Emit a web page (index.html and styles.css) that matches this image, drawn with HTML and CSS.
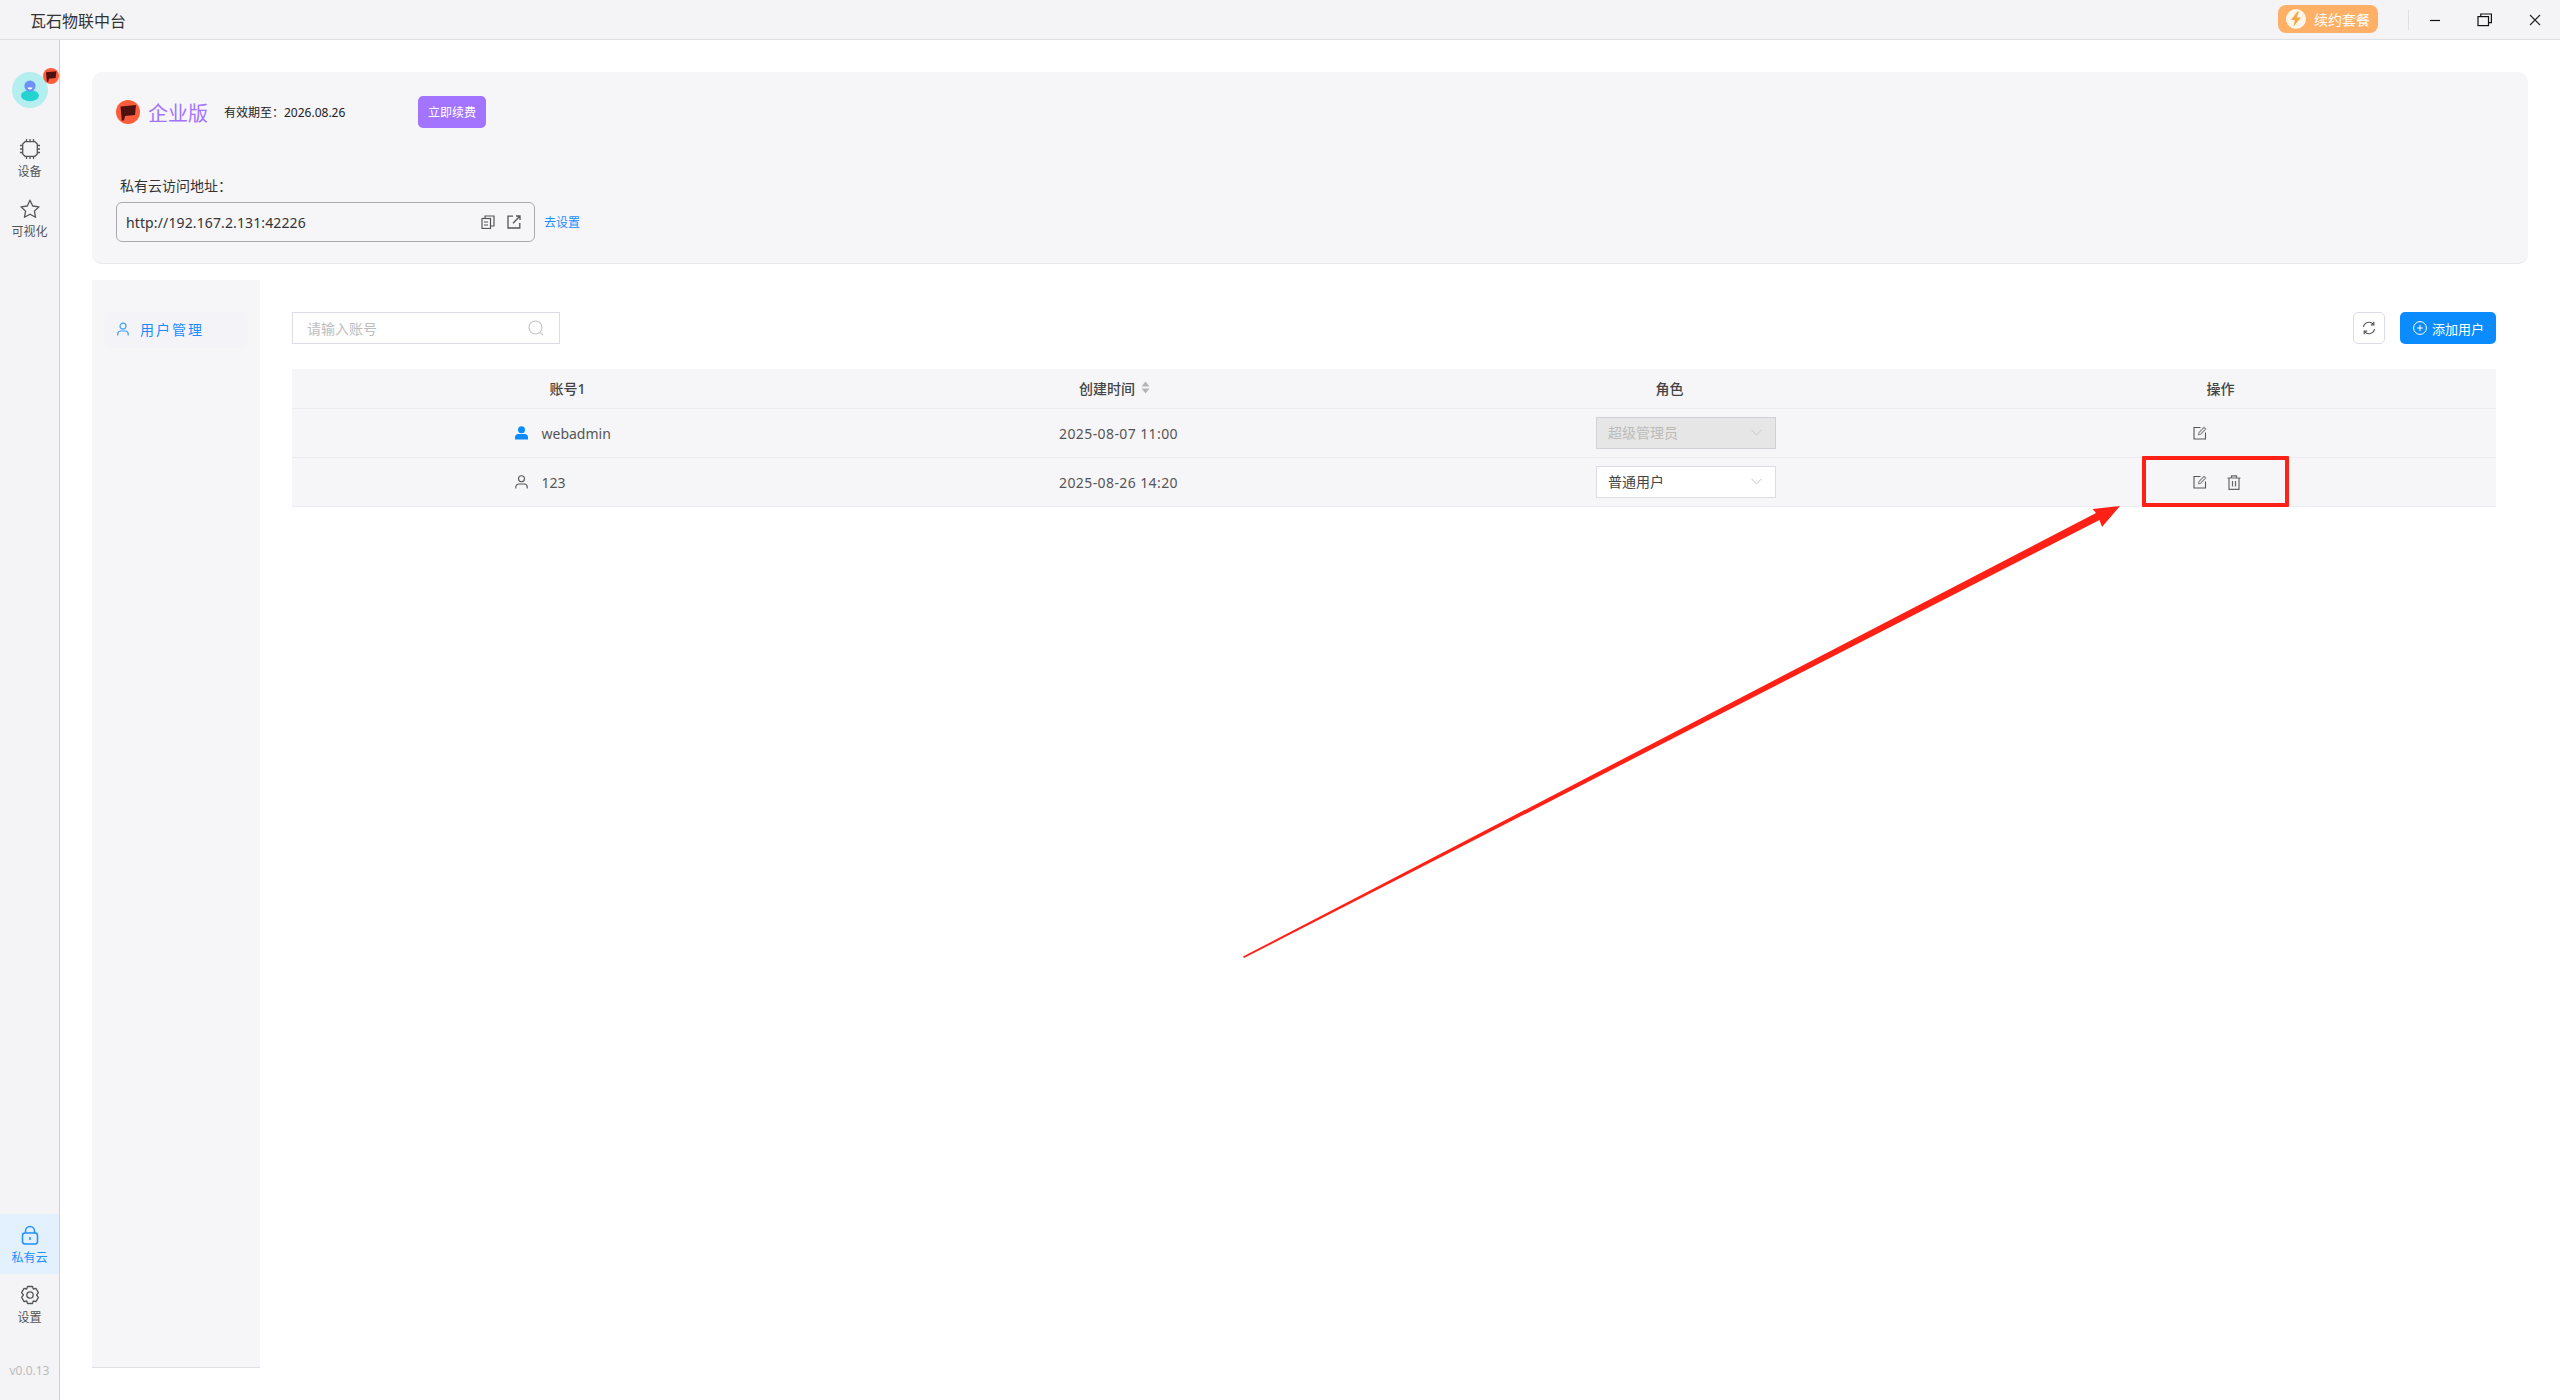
FILE: index.html
```html
<!DOCTYPE html>
<html>
<head>
    <title>瓦石物联中台</title>
    <link rel="stylesheet" href="styles.css">
</head>
<body>
    <div class="titlebar">
        <div class="app-name">瓦石物联中台</div>
        <div class="renew-pill">
            <span class="bolt">
                <svg width="14" height="16" viewBox="0 0 14 16"><path d="M8.5 0.5 2 9h4l-1.5 6.5L12 6.5H7.6L10 0.5z" fill="#f5a640"/></svg>
            </span>
            <span>续约套餐</span>
        </div>
        <div class="title-sep"></div>
        <div class="win-btn">
            <svg width="12" height="12" viewBox="0 0 12 12"><path d="M1 6.5h10" stroke="#111" stroke-width="1.2"/></svg>
        </div>
        <div class="win-btn">
            <svg width="16" height="14" viewBox="0 0 16 14" fill="none" stroke="#111" stroke-width="1.2"><rect x="1" y="3.6" width="10.5" height="9"/><path d="M3.8 3.6V1h10.6v8.6h-2.9"/></svg>
        </div>
        <div class="win-btn">
            <svg width="12" height="12" viewBox="0 0 12 12"><path d="M1 1l10 10M11 1 1 11" stroke="#222" stroke-width="1.1"/></svg>
        </div>
    </div>

    <div class="layout">
        <div class="sidebar">
            <div class="avatar">
                <svg width="36" height="36" viewBox="0 0 36 36">
                    <circle cx="18" cy="18" r="18" fill="#b5eeee"/>
                    <ellipse cx="18" cy="23.6" rx="9" ry="5.6" fill="#22d3d0"/>
                    <circle cx="18" cy="14" r="5.6" fill="#6d92f5"/>
                    <path d="M15.6 15.6h4.8a2.4 2 0 0 1-4.8 0z" fill="#fff"/>
                </svg>
                <svg class="avatar-badge" width="16" height="16" viewBox="0 0 24 24">
                    <circle cx="12" cy="12" r="12" fill="#ff5c3c"/>
                    <path d="M4.5 6.5 20 5l-1 10-10 1-1 4.5H5.8z" fill="#4d1210"/>
                </svg>
            </div>
            <div class="nav-item">
                <svg width="20" height="20" viewBox="0 0 20 20" fill="none" stroke="#555" stroke-width="1.3"><path d="M5 2.700h10l2.300 2.300v10L15 17.300H5L2.700 15V5z"/><path d="M6.500 0v2.700M10 0v2.700M13.500 0v2.700M6.500 17.300V20M10 17.300V20M13.500 17.300V20M0 6.500h2.700M0 10h2.700M0 13.500h2.700M17.300 6.500H20M17.300 10H20M17.300 13.500H20"/></svg>
                <span>设备</span>
            </div>
            <div class="nav-item">
                <svg width="20" height="20" viewBox="0 0 20 20" fill="none" stroke="#555" stroke-width="1.3" stroke-linejoin="round"><path d="M10 1.200l2.700 5.800 6.300.8-4.600 4.300 1.200 6.200L10 15.200l-5.600 3.100 1.200-6.200L1 7.800l6.300-.8z"/></svg>
                <span>可视化</span>
            </div>
            <div class="sidebar-fill"></div>
            <div class="nav-item active">
                <svg width="20" height="20" viewBox="0 0 20 20" fill="none" stroke="#1e90ff" stroke-width="1.5"><rect x="2.500" y="8" width="15" height="11" rx="2.500"/><path d="M5.500 8V6a4.500 4.500 0 0 1 9 0v2"/><path d="M10 12v3"/></svg>
                <span>私有云</span>
            </div>
            <div class="nav-item">
                <svg width="20" height="20" viewBox="0 0 20 20" fill="none" stroke="#555" stroke-width="1.3" stroke-linejoin="round"><path d="M7.500 1.500h5l.8 2.500 2.600-.6 2.500 4.300-1.800 2.300 1.800 2.300-2.500 4.300-2.600-.6-.8 2.500h-5l-.8-2.500-2.600.6-2.500-4.300L3.400 10 1.600 7.700l2.500-4.300 2.600.6z"/><circle cx="10" cy="10" r="3.200"/></svg>
                <span>设置</span>
            </div>
            <div class="version">v0.0.13</div>
        </div>

        <div class="main">
            <div class="plan-card">
                <div class="plan-row">
                    <svg width="24" height="24" viewBox="0 0 24 24">
                        <circle cx="12" cy="12" r="12" fill="#ff5c3c"/>
                        <path d="M4.500 6.500 20 5l-1 10-10 1-1 4.500H5.800z" fill="#4d1210"/>
                    </svg>
                    <span class="plan-name">企业版</span>
                    <span class="plan-date">有效期至：2026.08.26</span>
                    <button class="renew-btn">立即续费</button>
                </div>
                <div class="addr-label">私有云访问地址：</div>
                <div class="addr-row">
                    <div class="addr-box">
                        <span class="addr-text">http://192.167.2.131:42226</span>
                        <svg width="14" height="14" viewBox="0 0 14 14" fill="none" stroke="#555" stroke-width="1.200"><rect x="1" y="3.500" width="8.500" height="10"/><path d="M4 3.500V1h9v10h-3.500M3 7h4M3 10h4"/></svg>
                        <svg width="14" height="14" viewBox="0 0 14 14" fill="none" stroke="#555" stroke-width="1.300"><path d="M6 1.200H1v11.800h11.800V8"/><path d="M6 8.200 13 1M9 1h4v4"/></svg>
                    </div>
                    <a class="addr-link">去设置</a>
                </div>
            </div>

            <div class="lower">
                <div class="side-panel">
                    <div class="panel-item">
                        <svg width="14" height="14" viewBox="0 0 14 14" fill="none" stroke="#3aa0ff" stroke-width="1.200"><circle cx="7" cy="4.200" r="3"/><path d="M1.800 13.500v-1.500a3 3 0 0 1 3-3h4.400a3 3 0 0 1 3 3v1.500"/></svg>
                        <span>用户管理</span>
                    </div>
                </div>
                <div class="content">
                    <div class="toolbar">
                        <div class="search-box">
                            <input class="search-input" type="text" placeholder="请输入账号">
                            <svg width="16" height="16" viewBox="0 0 16 16" fill="none" stroke="#c4c4c4" stroke-width="1.100"><circle cx="7.500" cy="7.500" r="6.500"/><path d="M12.300 12.300l2.700 2.700"/></svg>
                        </div>
                        <div class="toolbar-fill"></div>
                        <button class="refresh-btn">
                            <svg width="14" height="14" viewBox="0 0 14 14" fill="none" stroke="#555" stroke-width="1.200"><path d="M1.500 6A5.600 5.600 0 0 1 11.400 3.400M12.500 8A5.600 5.600 0 0 1 2.600 10.600"/><path d="M11.800 0.800v3h-3M2.200 13.200v-3h3"/></svg>
                        </button>
                        <button class="add-btn">
                            <svg width="14" height="14" viewBox="0 0 14 14" fill="none" stroke="#fff" stroke-width="1"><circle cx="7" cy="7" r="6.400"/><path d="M7 4v6M4 7h6"/></svg>
                            <span>添加用户</span>
                        </button>
                    </div>

                    <table class="user-table">
                        <thead>
                            <tr>
                                <th>账号1</th>
                                <th class="sort-head">创建时间<svg class="sort-icon" width="9" height="13" viewBox="0 0 9 13" fill="#b5b5b5"><path d="M4.500 0.500 8.500 5.500H0.500zM4.500 12.500 0.500 7.500H8.500z"/></svg></th>
                                <th>角色</th>
                                <th>操作</th>
                            </tr>
                        </thead>
                        <tbody>
                            <tr>
                                <td>
                                    <div class="account">
                                        <svg width="13" height="14" viewBox="0 0 13 14" fill="#0a8cff"><circle cx="6.500" cy="3.800" r="3.500"/><path d="M0 13.500v-2a3.500 3.500 0 0 1 3.500-3.500h6a3.500 3.500 0 0 1 3.500 3.500v2z"/></svg>
                                        <span>webadmin</span>
                                    </div>
                                </td>
                                <td class="date-cell">2025-08-07 11:00</td>
                                <td>
                                    <div class="role-select disabled">
                                        <span>超级管理员</span>
                                        <svg width="11" height="7" viewBox="0 0 11 7" fill="none" stroke="#c8c8c8"><path d="M0.500 0.800 5.500 6l5-5.200"/></svg>
                                    </div>
                                </td>
                                <td>
                                    <div class="actions">
                                        <svg width="14" height="14" viewBox="0 0 14 14" fill="none" stroke="#555" stroke-width="1.100"><path d="M7.500 1.500H1v11.500h11.500V6.500"/><path d="M5.500 8.800l.5-2.300L11 1.300l1.700 1.700-5 5.200z" stroke="#888"/></svg>
                                    </div>
                                </td>
                            </tr>
                            <tr>
                                <td>
                                    <div class="account">
                                        <svg width="13" height="14" viewBox="0 0 13 14" fill="none" stroke="#555" stroke-width="1.100"><circle cx="6.500" cy="3.800" r="3"/><path d="M0.800 13.500v-1.500a3 3 0 0 1 3-3h5.400a3 3 0 0 1 3 3v1.500"/></svg>
                                        <span>123</span>
                                    </div>
                                </td>
                                <td class="date-cell">2025-08-26 14:20</td>
                                <td>
                                    <div class="role-select">
                                        <span>普通用户</span>
                                        <svg width="11" height="7" viewBox="0 0 11 7" fill="none" stroke="#c8c8c8"><path d="M0.500 0.800 5.500 6l5-5.200"/></svg>
                                    </div>
                                </td>
                                <td>
                                    <div class="actions">
                                        <svg width="14" height="14" viewBox="0 0 14 14" fill="none" stroke="#555" stroke-width="1.100"><path d="M7.500 1.500H1v11.500h11.500V6.500"/><path d="M5.500 8.800l.5-2.300L11 1.300l1.700 1.700-5 5.200z" stroke="#888"/></svg>
                                        <svg width="14" height="15" viewBox="0 0 14 15" fill="none" stroke="#666" stroke-width="1.200"><path d="M0.500 3h13M4.500 3V0.800h5V3M2 3v11.400h10V3M5.500 6v5.500M8.500 6v5.500"/></svg>
                                    </div>
                                </td>
                            </tr>
                        </tbody>
                    </table>
                </div>
            </div>
        </div>
    </div>

    <!-- red annotation drawn over the screenshot -->
    <div class="mark-box"></div>
    <svg class="mark-arrow" width="2560" height="1400" viewBox="0 0 2560 1400">
        <path d="M1243 956.500 2096 513 2092.500 509 2120 506 2102 527 2099.500 520 1244 958z" fill="#ff2116"/>
    </svg>
</body>
</html>
```

FILE: styles.css
```css
* {
    box-sizing: border-box;
}

html, body {
    height: 100%;
}

body {
    margin: 0;
    font-family: "Noto Sans", "Noto Sans CJK SC", sans-serif;
    font-size: 14px;
    color: #333;
    background-color: #fff;
    overflow: hidden;
}

.titlebar {
    display: flex;
    align-items: center;
    height: 40px;
    padding-left: 30px;
    background-color: #f4f4f7;
    border-bottom: 1px solid #dfdfe6;
}

.app-name {
    font-size: 16px;
    color: #333;
    flex: 1;
}

.renew-pill {
    display: flex;
    align-items: center;
    gap: 8px;
    width: 100px;
    height: 28px;
    margin-top: -1px;
    padding-left: 8px;
    border-radius: 8px;
    background-color: #ffb066;
    color: #fff;
    font-size: 14px;
}

.bolt {
    display: flex;
    align-items: center;
    justify-content: center;
    width: 20px;
    height: 20px;
    border-radius: 50%;
    background-color: #fff5e8;
}

.title-sep {
    width: 1px;
    height: 20px;
    margin: 0 1px 0 30px;
    background-color: #dfdfe6;
}

.win-btn {
    display: flex;
    align-items: center;
    justify-content: center;
    width: 50px;
    height: 39px;
}

.layout {
    display: flex;
    height: 1360px;
}

.sidebar {
    display: flex;
    flex-direction: column;
    flex: none;
    width: 60px;
    padding-top: 32px;
    background-color: #f4f4f7;
    border-right: 1px solid #cfcfd4;
}

.avatar {
    position: relative;
    width: 36px;
    height: 36px;
    margin: 0 0 20px 12px;
}

.avatar svg {
    display: block;
}

.avatar-badge {
    position: absolute;
    top: -4px;
    left: 31px;
}

.nav-item {
    display: flex;
    flex-direction: column;
    align-items: center;
    height: 60px;
    padding-top: 11px;
    font-size: 12px;
    line-height: 18px;
    color: #555;
}

.nav-item svg {
    margin-bottom: 4px;
}

.nav-item.active {
    background-color: #e3f1ff;
    color: #2090ff;
}

.sidebar-fill {
    flex: 1;
}

.version {
    height: 66px;
    padding-top: 27px;
    text-align: center;
    font-size: 12px;
    line-height: 20px;
    color: #bbb;
}

.main {
    flex: 1;
    display: flex;
    flex-direction: column;
    padding: 32px 32px 32px 32px;
}

.plan-card {
    height: 192px;
    padding: 24px 24px 0 24px;
    border-radius: 10px;
    background-color: #f6f6f9;
    border-bottom: 1px solid #e6e6ec;
}

.plan-row {
    display: flex;
    align-items: center;
    height: 32px;
}

.plan-name {
    margin-left: 8px;
    font-size: 20px;
    color: #a274ff;
}

.plan-date {
    margin-left: 16px;
    width: 194px;
    font-size: 12px;
    color: #222;
}

.renew-btn {
    width: 68px;
    height: 32px;
    border: none;
    border-radius: 5px;
    background-color: #a274ff;
    color: #fff;
    font-family: inherit;
    font-size: 12px;
    padding: 0;
}

.addr-label {
    margin: 48px 0 0 4px;
    height: 20px;
    line-height: 20px;
    color: #333;
}

.addr-row {
    display: flex;
    align-items: center;
    gap: 9px;
    margin-top: 6px;
}

.addr-box {
    display: flex;
    align-items: center;
    gap: 12px;
    width: 419px;
    height: 40px;
    padding: 0 13px 0 9px;
    border: 1px solid #aaa;
    border-radius: 6px;
}

.addr-text {
    flex: 1;
    letter-spacing: 0.12px;
    color: #333;
}

.addr-link {
    font-size: 12px;
    color: #1a8cff;
}

.lower {
    flex: 1;
    display: flex;
    margin-top: 16px;
}

.side-panel {
    flex: none;
    width: 168px;
    padding: 32px 12px 0 12px;
    background-color: #f6f6f9;
    border-bottom: 1px solid #dfdfe6;
}

.panel-item {
    display: flex;
    align-items: center;
    gap: 10px;
    height: 36px;
    padding: 0 0 2px 12px;
    border-radius: 6px;
    background-color: #f4f4f8;
    color: #1a8cff;
    letter-spacing: 2px;
}

.content {
    flex: 1;
    padding: 32px 32px 0 32px;
}

.toolbar {
    display: flex;
    align-items: center;
    height: 32px;
    margin-bottom: 25px;
}

.toolbar-fill {
    flex: 1;
}

.search-box {
    display: flex;
    align-items: center;
    width: 268px;
    height: 32px;
    padding: 0 15px 0 14px;
    border: 1px solid #dcdce6;
}

.search-input {
    flex: 1;
    min-width: 0;
    border: none;
    outline: none;
    padding: 0;
    font-family: inherit;
    font-size: 14px;
    background: transparent;
}

.search-input::placeholder {
    color: #bdbdbd;
}

.refresh-btn {
    display: flex;
    align-items: center;
    justify-content: center;
    width: 32px;
    height: 32px;
    padding: 0;
    border: 1px solid #dcdce6;
    border-radius: 5px;
    background-color: #fff;
}

.add-btn {
    display: flex;
    align-items: center;
    gap: 5px;
    width: 96px;
    height: 32px;
    margin-left: 15px;
    padding: 0 0 0 13px;
    border: none;
    border-radius: 5px;
    background-color: #0a8cff;
    color: #fff;
    font-family: inherit;
    font-size: 13px;
}

.user-table {
    width: 100%;
    table-layout: fixed;
    border-collapse: separate;
    border-spacing: 0;
}

.user-table th,
.user-table td {
    padding: 0;
    text-align: center;
    background-color: #f6f6f9;
    border-bottom: 1px solid #ebebf2;
}

.user-table th {
    height: 40px;
    padding-bottom: 2px;
    font-weight: 500;
    color: #444;
}

.user-table td {
    height: 49px;
    color: #555;
}

.user-table th.sort-head {
    padding-right: 8px;
}

.sort-icon {
    margin-left: 6px;
    vertical-align: 0;
}

.date-cell {
    letter-spacing: 0.4px;
}

.account {
    display: flex;
    align-items: center;
    gap: 14px;
    width: 104px;
    margin: 0 auto;
    position: relative;
    left: -1px;
    text-align: left;
}

.role-select {
    display: flex;
    align-items: center;
    justify-content: space-between;
    width: 180px;
    height: 32px;
    margin: 0 0 0 202px;
    padding: 0 13px 2px 11px;
    background-color: #fff;
    border: 1px solid #dcdce6;
    font-size: 14px;
    color: #444;
}

.role-select.disabled {
    background-color: #e6e6e6;
    border-color: #d0d0d8;
    color: #bbb;
}

.actions {
    display: flex;
    align-items: center;
    gap: 20px;
    width: 52px;
    margin: 0 auto;
    position: relative;
    left: -2px;
}

.mark-box {
    position: absolute;
    left: 2142px;
    top: 456px;
    width: 147px;
    height: 51px;
    border: 4px solid #ff2116;
    border-radius: 1px;
}

.mark-arrow {
    position: absolute;
    left: 0;
    top: 0;
    pointer-events: none;
}
```
